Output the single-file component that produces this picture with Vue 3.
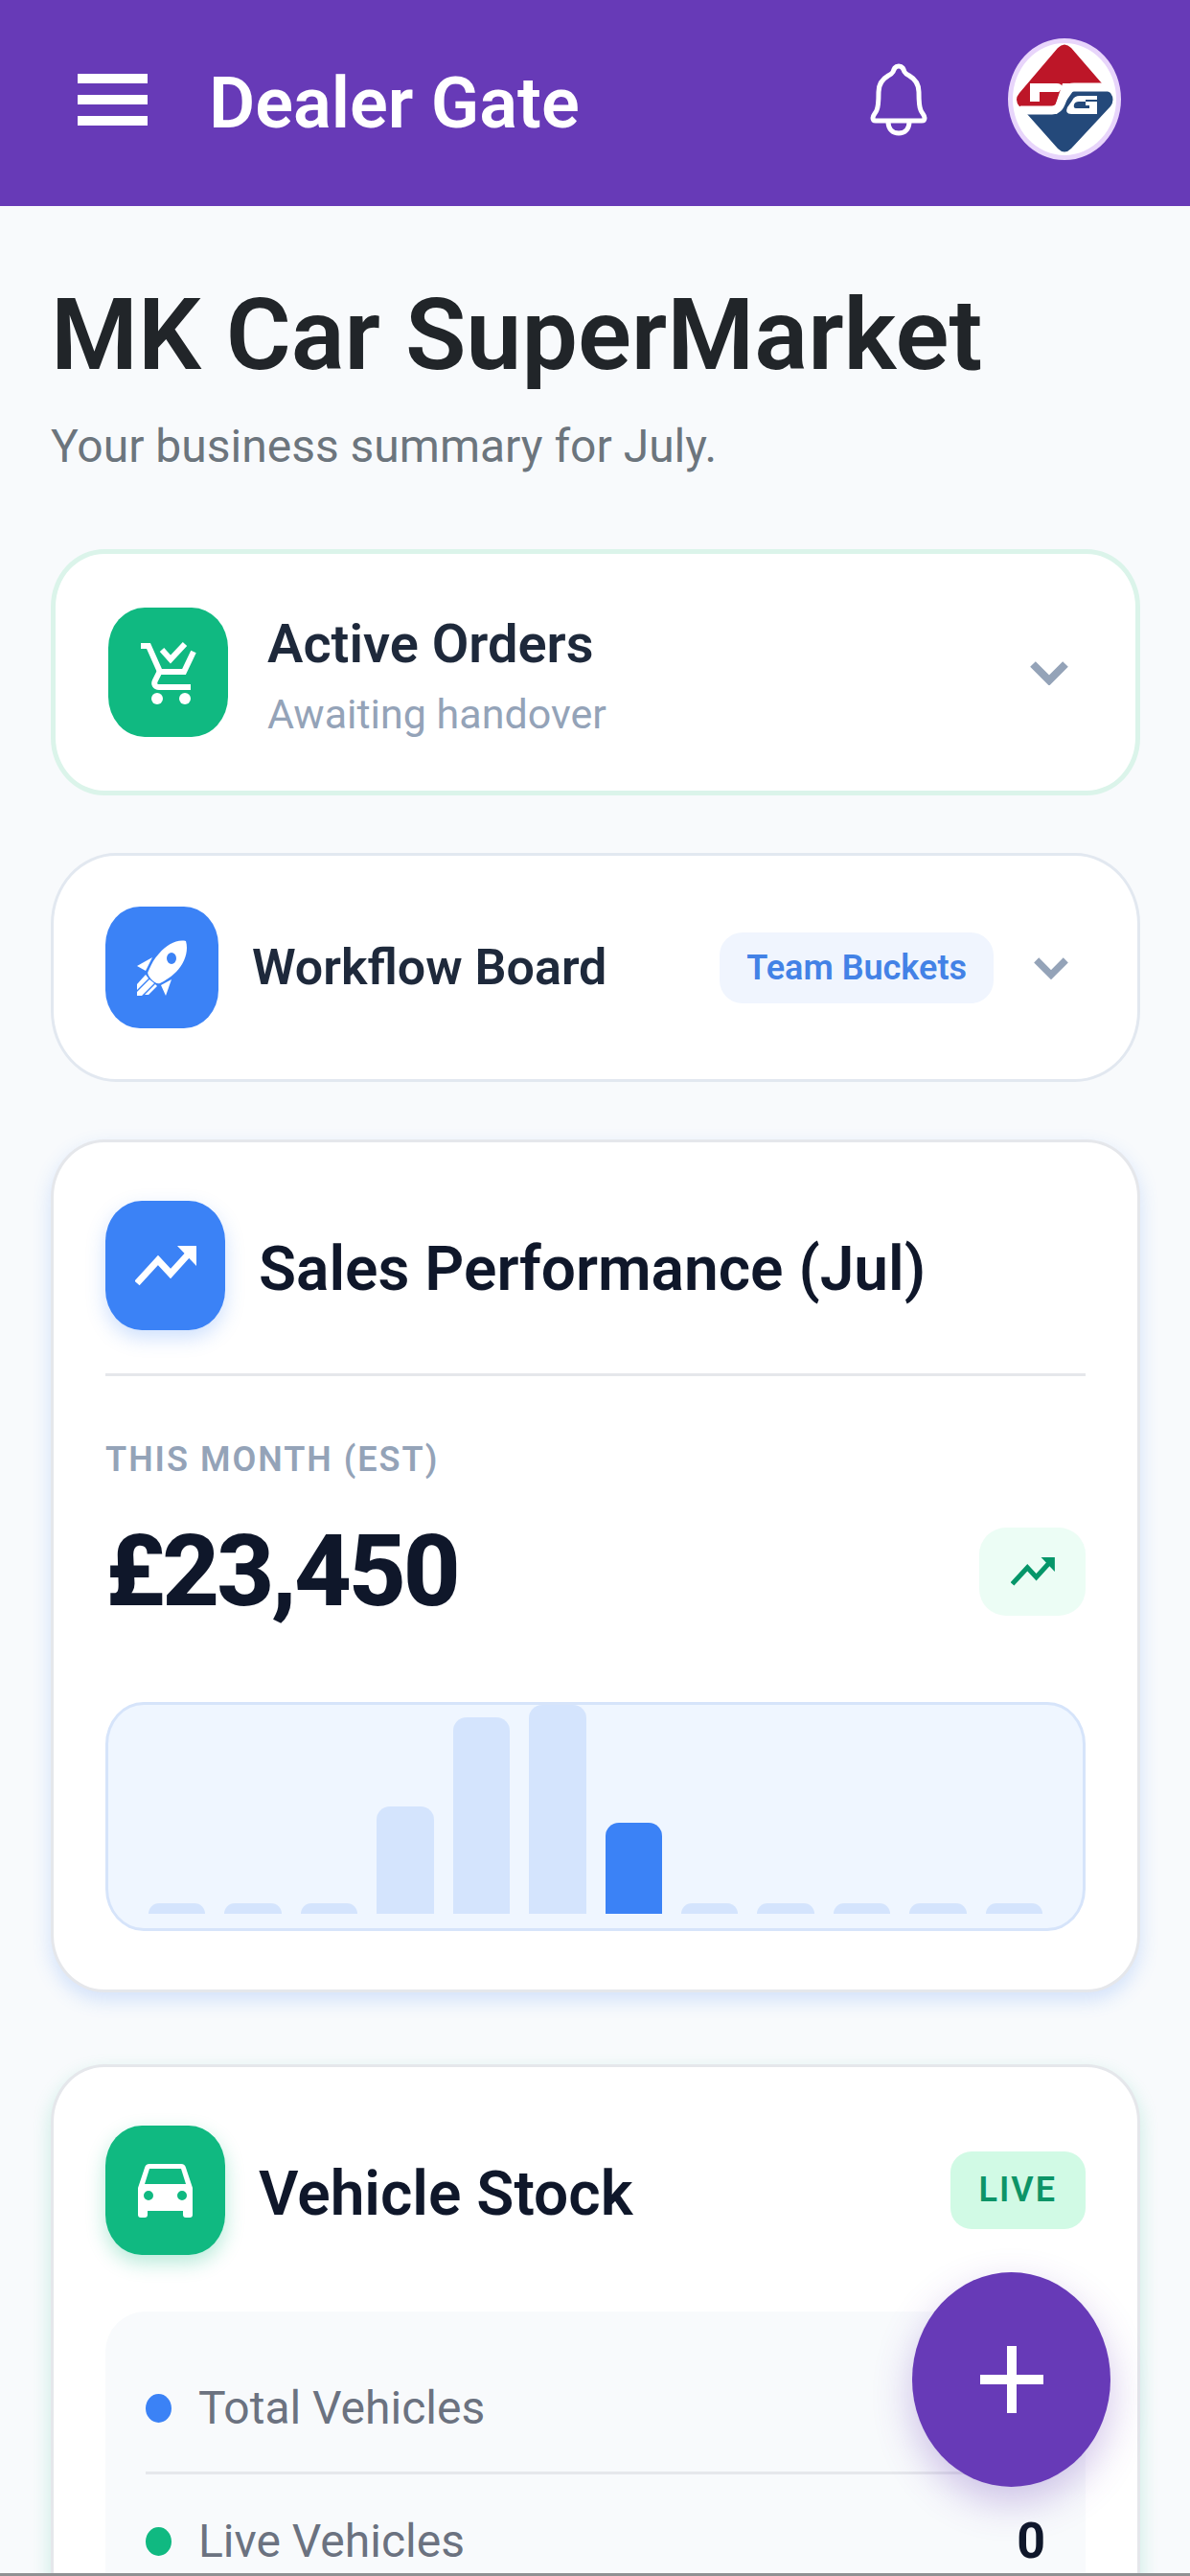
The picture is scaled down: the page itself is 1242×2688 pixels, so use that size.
<script setup>
import { ref, computed } from "vue";

const monthly = ref([0, 0, 0, 112, 205, 218, 95, 0, 0, 0, 0, 0]);
const currentMonth = 6;

// empty months still show a small stub
const bars = computed(() =>
  monthly.value.map((value, i) => ({
    height: Math.max(value, 11),
    active: i === currentMonth,
  }))
);

const stock = ref([
  { label: "Total Vehicles", value: 0, color: "blue" },
  { label: "Live Vehicles", value: 0, color: "green" },
]);
</script>

<template>
  <div class="app">
    <header class="topbar">
      <button class="icon-btn menu" aria-label="Menu">
        <span></span>
        <span></span>
        <span></span>
      </button>
      <div class="brand">Dealer Gate</div>
      <button class="icon-btn bell" aria-label="Notifications">
        <svg viewBox="0 0 60 76" width="60" height="76" fill="none" stroke="#fff" stroke-width="5">
          <path
            d="M30 3c-4 0-5 3-6 6-1 2-3 3-5 4C12 17 9 23 9 30c0 9 0 15-2 19-1 3-4 5-4 8 0 2 1 3 3 3h48c2 0 3-1 3-3 0-3-3-5-4-8-2-4-2-10-2-19 0-7-3-13-10-17-2-1-4-2-5-4-1-3-2-6-6-6z"
            stroke-linejoin="round"
          />
          <path d="M19 61c0 8 5 12 11 12s11-4 11-12" />
        </svg>
      </button>
      <button class="icon-btn avatar" aria-label="Account">
        <svg viewBox="0 0 108 117" width="108" height="117">
          <path d="M47 5q7-7 14 0L93 42H52L44 66H7q-6-7 0-14z" fill="#bd1628" />
          <path d="M15 74l32 36q7 7 14 0L102 66q5-7 0-14l-3-2H63L46 74z" fill="#24497a" />
          <path d="M18 42h28q5 0 6 4l-4 5H28v10H18z" fill="#fff" />
          <path
            d="M8 70h33c14 0 8-24 23-24h37"
            fill="none"
            stroke="#fff"
            stroke-width="9"
          />
          <path
            d="M88 55H70q-6 0-8 5l-5 7q-3 7 4 7h27V61H76v4h4v3H66q-3 0-2-4 1-3 5-3h7v-2h12z"
            fill="#fff"
          />
        </svg>
      </button>
    </header>

    <main class="content">
      <h1>MK Car SuperMarket</h1>
      <p class="subtitle">Your business summary for July.</p>

      <button class="card orders">
        <span class="tile green">
          <svg viewBox="0 0 58 66" width="58" height="66" fill="none" stroke="#fff" stroke-width="6">
            <path d="M0 5h8l12 27h25L55 11" />
            <path d="M20 31l-5 10c-2 4 0 7 4 7h33" />
            <path d="M22 9l9 10L46 3" />
            <circle cx="17" cy="60" r="6" fill="#fff" stroke="none" />
            <circle cx="46" cy="60" r="6" fill="#fff" stroke="none" />
          </svg>
        </span>
        <span class="card-text">
          <span class="card-title">Active Orders</span>
          <span class="card-sub">Awaiting handover</span>
        </span>
        <svg class="chevron" viewBox="0 0 40 26" width="40" height="26">
          <path d="M3 4l17 17L37 4" />
        </svg>
      </button>

      <button class="card workflow">
        <span class="tile small blue">
          <svg viewBox="0 0 54 58" width="54" height="58" fill="#fff">
            <path
              d="M52 1c3 10-1 23-10 32-5 5-11 9-17 12-3 1-6-1-9-4-3-4-5-6-3-9 3-7 6-13 11-18C32 5 42-1 52 1zM37 13a5 6 0 1 0 0 12 5 6 0 1 0 0-12z"
              fill-rule="evenodd"
            />
            <path d="M17 18l-7 14-9-5z" />
            <path d="M26 47l11-6-6 17z" />
            <path d="M10 36l3 4-12 12 0-6z" />
            <path d="M14 41l5 4-13 13H1v-4z" />
            <path d="M20 46l2 2-9 9-4 0z" />
          </svg>
        </span>
        <span class="card-title">Workflow Board</span>
        <span class="tag">Team Buckets</span>
        <svg class="chevron" viewBox="0 0 40 26" width="36" height="24">
          <path d="M3 4l17 17L37 4" />
        </svg>
      </button>

      <section class="card panel-card sales">
        <div class="panel-head lined">
          <span class="tile blue glow-blue">
            <svg viewBox="0 0 64 42" width="64" height="42">
              <path d="M2 39L24 15l13 14L57 7" fill="none" stroke="#fff" stroke-width="7" />
              <path d="M44 0h20v21z" fill="#fff" />
            </svg>
          </span>
          <h2>Sales Performance (Jul)</h2>
        </div>
        <div class="label">THIS MONTH (EST)</div>
        <div class="figure">
          <span class="amount">£23,450</span>
          <span class="trend">
            <svg viewBox="0 0 64 42" width="46" height="30">
              <path d="M2 39L24 15l13 14L57 7" fill="none" stroke="#059669" stroke-width="7" />
              <path d="M44 0h20v21z" fill="#059669" />
            </svg>
          </span>
        </div>
        <div class="chart">
          <div
            v-for="(bar, i) in bars"
            :key="i"
            class="bar"
            :class="{ active: bar.active }"
            :style="{ height: bar.height + 'px' }"
          ></div>
        </div>
      </section>

      <section class="card panel-card vehicles">
        <div class="panel-head">
          <span class="tile green glow-green">
            <svg viewBox="0 0 57 56" width="57" height="56" fill="#fff" fill-rule="evenodd">
              <path
                d="M12 0h33q4 0 5 4l7 21v28q0 3-3 3h-4q-3 0-3-3v-4H10v4q0 3-3 3H3q-3 0-3-3V25L7 4q1-4 5-4zM12 5L7 21h43L45 5zM11 28a5 5 0 1 0 0 10 5 5 0 1 0 0-10zM46 28a5 5 0 1 0 0 10 5 5 0 1 0 0-10z"
              />
            </svg>
          </span>
          <h2>Vehicle Stock</h2>
          <span class="live">LIVE</span>
        </div>
        <div class="stock">
          <div v-for="item in stock" :key="item.label" class="stock-row">
            <span class="dot" :class="item.color"></span>
            <span class="stock-label">{{ item.label }}</span>
            <strong>{{ item.value }}</strong>
          </div>
        </div>
      </section>
    </main>

    <button class="fab" aria-label="Add">
      <svg viewBox="0 0 66 70" width="66" height="70" fill="#fff">
        <path d="M0 30h66v10H0zM28 0h10v70H28z" />
      </svg>
    </button>
  </div>
</template>

<style>
body {
  margin: 0;
}
</style>

<style scoped>
.app {
  position: relative;
  display: flex;
  flex-direction: column;
  height: 100vh;
  overflow: hidden;
  box-sizing: border-box;
  border-bottom: 3px solid #8f9193;
  background: #f8fafc;
  font-family: Roboto, "Liberation Sans", sans-serif;
  color: #0f172a;
}

button {
  margin: 0;
  border: none;
  background: none;
  font-family: inherit;
  color: inherit;
  text-align: left;
  cursor: pointer;
}

svg {
  display: block;
  flex: none;
}

.topbar {
  display: flex;
  flex: none;
  align-items: center;
  height: 215px;
  box-sizing: border-box;
  padding: 0 72px 8px 81px;
  background: #673ab7;
}

.icon-btn {
  flex: none;
  padding: 0;
}

.menu {
  display: flex;
  flex-direction: column;
  gap: 12px;
  width: 73px;
}

.menu span {
  height: 10px;
  background: #fff;
}

.brand {
  flex: 1;
  padding-top: 8px;
  margin-left: 64px;
  font-size: 74px;
  font-weight: 600;
  line-height: 88px;
  color: #fff;
}

.avatar {
  box-sizing: border-box;
  width: 118px;
  height: 127px;
  margin-left: 84px;
  border: 5px solid #e8d5fb;
  border-radius: 50%;
  background: #fff;
}

.content {
  flex: 1;
  min-height: 0;
  overflow: hidden;
  padding: 75px 52px 0 53px;
}

h1 {
  margin: 0;
  font-size: 104px;
  font-weight: 600;
  line-height: 120px;
  color: #212529;
}

.subtitle {
  margin: 22px 0 73px;
  font-size: 48px;
  line-height: 68px;
  color: #6c757d;
}

.card {
  display: flex;
  align-items: center;
  width: 100%;
  box-sizing: border-box;
  background: #fff;
}

.orders {
  padding: 56px 70px 56px 55px;
  border: 5px solid #dbf4ea;
  border-radius: 56px / 60px;
}

.workflow {
  margin-top: 60px;
  padding: 53px 72px 53px 54px;
  border: 3px solid #e2e8f0;
  border-radius: 68px / 74px;
}

.tile {
  display: flex;
  flex: none;
  align-items: center;
  justify-content: center;
  width: 125px;
  height: 135px;
  border-radius: 38px / 42px;
}

.tile.small {
  width: 118px;
  height: 127px;
  border-radius: 36px / 40px;
}

.blue {
  background: #3b82f6;
}

.green {
  background: #10b981;
}

.glow-blue {
  box-shadow: 0 8px 20px rgba(59, 130, 246, 0.25);
}

.glow-green {
  box-shadow: 0 8px 20px rgba(16, 185, 129, 0.3);
}

.card-text {
  display: flex;
  flex: 1;
  flex-direction: column;
  gap: 25px;
  padding-top: 14px;
  margin-left: 41px;
}

.card-title {
  font-size: 56px;
  font-weight: 600;
  line-height: 48px;
  color: #1e293b;
}

.workflow .card-title {
  flex: 1;
  margin-left: 35px;
  font-size: 52px;
}

.card-sub {
  font-size: 43px;
  line-height: 48px;
  color: #94a3b8;
}

.tag {
  padding: 0 28px;
  margin-right: 42px;
  border-radius: 24px;
  background: #f0f5fe;
  font-size: 36px;
  font-weight: 600;
  line-height: 74px;
  color: #4382e6;
}

.chevron {
  fill: none;
  stroke: #94a3b8;
  stroke-width: 8;
}

.panel-card {
  display: block;
  padding: 61px 54px;
  border: 3px solid #e5e7eb;
  border-radius: 56px / 60px;
}

.sales {
  margin-top: 60px;
  box-shadow: 0 8px 20px rgba(59, 130, 246, 0.2);
}

.vehicles {
  margin-top: 75px;
  box-shadow: 0 8px 20px rgba(16, 185, 129, 0.2);
}

.panel-head {
  display: flex;
  align-items: center;
}

.panel-head.lined {
  padding-bottom: 45px;
  border-bottom: 3px solid #e5e7eb;
}

h2 {
  flex: 1;
  margin: 8px 0 0 35px;
  font-size: 64px;
  font-weight: 600;
  line-height: 80px;
}

.label {
  margin-top: 63px;
  font-size: 36px;
  font-weight: 600;
  line-height: 48px;
  letter-spacing: 2px;
  color: #94a3b8;
}

.figure {
  display: flex;
  align-items: center;
  justify-content: space-between;
  height: 92px;
  margin-top: 47px;
}

.amount {
  font-size: 104px;
  font-weight: 800;
  line-height: 92px;
  letter-spacing: -3px;
}

.trend {
  display: flex;
  align-items: center;
  justify-content: center;
  width: 111px;
  height: 92px;
  border-radius: 28px;
  background: #ecfdf5;
}

.chart {
  display: flex;
  align-items: flex-end;
  gap: 20px;
  box-sizing: border-box;
  height: 239px;
  margin-top: 90px;
  padding: 0 42px 15px;
  overflow: hidden;
  border: 3px solid #d6e4fa;
  border-radius: 40px / 44px;
  background: #eff6ff;
}

.bar {
  flex: 1;
  border-radius: 14px 14px 0 0;
  background: #d4e4fd;
}

.bar.active {
  background: #3b82f6;
}

.live {
  padding: 0 30px;
  border-radius: 22px;
  background: #d1fae5;
  font-size: 36px;
  font-weight: 600;
  line-height: 81px;
  letter-spacing: 2px;
  color: #0d9467;
}

.stock {
  margin-top: 59px;
  padding: 31px 42px;
  border-radius: 42px;
  background: #f8fafc;
}

.stock-row {
  display: flex;
  align-items: center;
  padding: 38px 0 34px;
  border-bottom: 3px solid #e5e7eb;
  font-size: 48px;
  line-height: 64px;
}

.dot {
  width: 27px;
  height: 30px;
  margin-right: 28px;
  border-radius: 50%;
}

.stock-label {
  flex: 1;
  color: #6b7280;
}

.stock-row strong {
  font-size: 52px;
  font-weight: 700;
}

.fab {
  position: absolute;
  right: 83px;
  bottom: 90px;
  display: flex;
  align-items: center;
  justify-content: center;
  width: 207px;
  height: 224px;
  padding: 0;
  border-radius: 50%;
  background: #673ab7;
  box-shadow: 0 16px 40px rgba(103, 58, 183, 0.3);
}
</style>
